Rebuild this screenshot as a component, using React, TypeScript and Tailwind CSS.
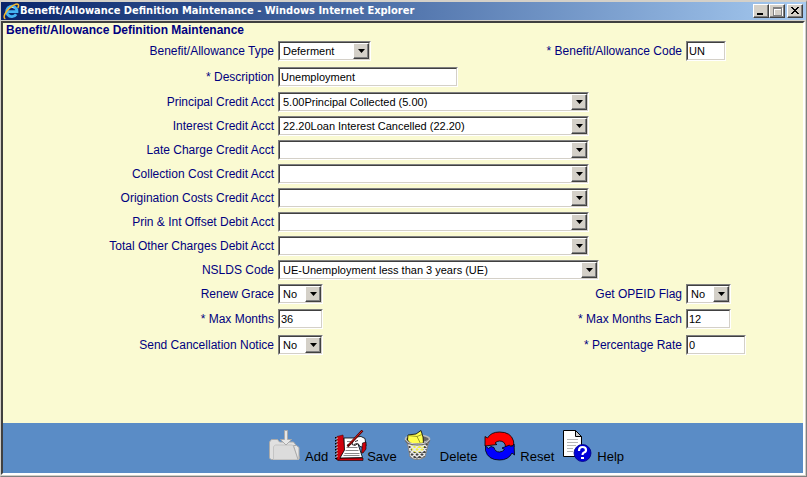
import type { ReactNode } from 'react';
import { clsx } from 'clsx';

const raised =
  'border border-t-white border-l-white border-r-[#404040] border-b-[#404040] bg-[#d4d0c8] shadow-[inset_-1px_-1px_0_#808080]';
const sunken =
  'border border-t-[#808080] border-l-[#808080] border-r-white border-b-white bg-white';
const sunkenInner =
  'border border-t-[#404040] border-l-[#404040] border-r-[#d4d0c8] border-b-[#d4d0c8]';
const controlFont =
  "font-['Liberation_Sans',Arial,sans-serif] text-[11px] leading-4 text-black";

type FieldProps = {
  id: string;
  label: string;
  width: string;
  value?: string;
};

function FieldLabel({ id, label }: { id: string; label: string }) {
  return (
    <label htmlFor={id} className="pr-1 text-right whitespace-nowrap">
      {label}
    </label>
  );
}

function SelectField({ id, label, width, value = '' }: FieldProps) {
  return (
    <>
      <FieldLabel id={id} label={label} />
      <div className={clsx('relative h-5', sunken, width)}>
        <select
          id={id}
          defaultValue={value}
          className={clsx(
            'block h-full w-full appearance-none pr-4 pl-[3px] outline-none',
            sunkenInner,
            controlFont
          )}
        >
          <option value={value}>{value}</option>
        </select>
        <span
          className={clsx(
            'pointer-events-none absolute top-px right-px bottom-px flex w-4 items-center justify-center',
            raised
          )}
        >
          <svg width="7" height="4" viewBox="0 0 7 4" aria-hidden="true">
            <path d="M0 0h7L3.5 4z" />
          </svg>
        </span>
      </div>
    </>
  );
}

function TextField({ id, label, width, value }: FieldProps) {
  return (
    <>
      <FieldLabel id={id} label={label} />
      <div className={clsx('h-5', sunken, width)}>
        <input
          id={id}
          type="text"
          defaultValue={value}
          className={clsx(
            'block h-full w-full px-px outline-none',
            sunkenInner,
            controlFont
          )}
        />
      </div>
    </>
  );
}

function Row({ tall, children }: { tall?: boolean; children: ReactNode }) {
  return (
    <div
      className={clsx(
        'grid grid-cols-[minmax(0,271fr)_minmax(0,262fr)_minmax(0,146fr)_minmax(0,117fr)] items-center',
        tall ? 'h-[26px]' : 'h-6'
      )}
    >
      {children}
    </div>
  );
}

const accounts = [
  { id: 'principal', label: 'Principal Credit Acct', value: '5.00Principal Collected (5.00)' },
  { id: 'interest', label: 'Interest Credit Acct', value: '22.20Loan Interest Cancelled (22.20)' },
  { id: 'late', label: 'Late Charge Credit Acct' },
  { id: 'collection', label: 'Collection Cost Credit Acct' },
  { id: 'origination', label: 'Origination Costs Credit Acct' },
  { id: 'offset', label: 'Prin & Int Offset Debit Acct' },
  { id: 'other', label: 'Total Other Charges Debit Acct' },
];

function ExplorerIcon() {
  return (
    <svg width="17" height="17" viewBox="0 0 17 17" fill="none" aria-hidden="true">
      <path
        d="M13.2 11.2A5.2 5.2 0 1 1 14 8.6H5"
        stroke="#45b5f2"
        strokeWidth="2.8"
      />
      <path d="M5.4 5.6a4.5 4.5 0 0 1 6-.4" stroke="#a5e2ff" />
      <path
        d="M2.4 15.7C-.8 15 2.3 8.5 7.4 4.4 11.2 1.2 15.2.1 15.6 2.2c.2 1-.4 2-.9 2.8"
        stroke="#f5b92c"
        strokeWidth="1.5"
      />
    </svg>
  );
}

function AddIcon() {
  return (
    <svg width="32" height="32" viewBox="0 0 32 32" strokeLinejoin="round" aria-hidden="true">
      <path d="M.5 28V12l2-2.500h6l2 2.500h14l2 2.500 4 13.500-1 1.500H2z" fill="#e0e0e0" stroke="#aaa" />
      <path d="M4.500 29.500V16.500l2-1.500h17l1 1.500 5 13z" fill="#dcdcdc" stroke="#c4c4c4" />
      <path d="M24.500 15.500h3l2.500 2v11l-1 1z" fill="#e4e4e4" stroke="#aaa" />
      <path d="M15.500.5h3v9h4l-5.500 5.500-5.500-5.500h4z" fill="#e6e6e6" stroke="#aaa" />
    </svg>
  );
}

function SaveIcon() {
  return (
    <svg width="32" height="32" viewBox="0 0 32 32" fill="none" aria-hidden="true">
      <path d="M2 28h26v2.500H3L1 29z" fill="#d0000c" stroke="#000" strokeWidth=".6" />
      <path d="M2 6.500L8 5l2 15-6 10-2-1z" fill="#d0000c" stroke="#500" strokeWidth=".6" />
      <path d="M9 8h12l6.500 19.500L5 28l4.500-8z" fill="#fff" stroke="#000" strokeWidth=".8" />
      <path d="M12 11.500h7M12 14.500h4M11.500 17.500h11M10.500 20.500h13M9.500 23.500h15M8.500 25.500h16" stroke="#888" />
      <path d="M1 7v22" stroke="#000" strokeWidth="2" strokeDasharray="1.5 1.5" />
      <path d="M2 7.500v21" stroke="#fff" strokeDasharray="1.5 1.5" />
      <path
        d="M18 11l3-4 5-.5 4 2 1 7-2 2-4-1-2-3-3 2-3-1z"
        fill="#fff"
        stroke="#000"
        strokeWidth=".8"
      />
      <path d="M27.500 13l3.500-1v7l-3 4h-1.500z" fill="#d0000c" stroke="#000" strokeWidth=".6" />
      <path d="M12.500 16.500L27.500.5" stroke="#500" strokeWidth="2.4" />
      <path d="M14 14.500L27 1" stroke="#d8201c" />
      <path d="M19 14.500l3-1M20 11.500l3-1" stroke="#000" strokeWidth=".8" />
    </svg>
  );
}

function DeleteIcon() {
  return (
    <svg width="32" height="32" viewBox="0 0 32 32" fill="none" aria-hidden="true">
      <clipPath id="basket">
        <path d="M3 11l3 16q7 5 15 0l4-16z" />
      </clipPath>
      <g clipPath="url(#basket)">
        <path d="M0 8h30v24H0z" fill="#444" />
        <path d="M6 13h15l-2 8-6 2-5-2z" fill="#f0f040" />
        <path
          d="M-14 10l22 22M-9 10l22 22M-4 10l22 22M1 10l22 22M6 10l22 22M11 10l22 22M16 10l22 22M21 10l22 22M10 10l-22 22M15 10l-22 22M20 10L-2 32M25 10L3 32M30 10L8 32M35 10L13 32M40 10L18 32"
          stroke="#e8e8e8"
          strokeWidth="1.4"
        />
      </g>
      <path d="M3 11l3 16q7 5 15 0l4-16" stroke="#888" />
      <ellipse cx="13.500" cy="9" rx="12" ry="4" fill="#666" stroke="#bbb" strokeWidth="1.6" />
      <path
        d="M4 5l8-1 5-3.500L19 7l.5 6-6 1-7-.5L3.500 10z"
        fill="#ffff50"
        stroke="#000"
        strokeWidth=".8"
      />
      <path d="M4 5.500l9 1 3.500 7M13 6.500l5-2" stroke="#86861c" strokeWidth=".8" />
      <path d="M1.500 10q2 4.500 12 4.500t12-4.500" stroke="#666" strokeWidth="2" />
      <path d="M1.500 9.500q2 4.500 12 4.500t12-4.500" stroke="#ddd" />
    </svg>
  );
}

function ResetIcon() {
  return (
    <svg width="32" height="32" viewBox="0 0 32 32" strokeWidth=".8" aria-hidden="true">
      <path
        d="M1 6.500l2.500 1.500Q7 2 15.500 2q11.500 0 14 9l.5 6-2.500-1.500-2 2-4-1q-.5-5.500-6-5.500-2.500 0-4.500 2l2 1.500L1 16z"
        fill="#f00"
        stroke="#000"
      />
      <path
        d="M30.500 25l-2.500-2q-3.500 7-12.500 7Q4 30 1.500 20.500V16l3 2.500 2.500-2 3 1q1 4.500 5.500 4.500 3 0 5-2.500l-2.500-1.500 7.500-3 2 2 2.500-3z"
        fill="#00f"
        stroke="#000"
      />
    </svg>
  );
}

function HelpIcon() {
  return (
    <svg width="32" height="32" viewBox="0 0 32 32" aria-hidden="true">
      <path d="M2.500.5h12l6 6v20h-18z" fill="#fff" stroke="#000" />
      <path d="M14.500.5v6h6z" fill="#ccc" stroke="#000" />
      <path d="M6 9.500h11M6 12.500h11M6 15.500h9M6 18.500h6M6 21.500h6" stroke="#b5b5b5" />
      <circle cx="21.500" cy="23" r="8.500" fill="#0000d8" stroke="#000080" strokeWidth=".8" />
      <path
        d="M18 21q0-4 3.500-4t3.500 3q0 2-2 2.500-1.500.5-1.500 2.500"
        fill="none"
        stroke="#fff"
        strokeWidth="2.2"
      />
      <path d="M20 27h3v2h-3z" fill="#fff" />
    </svg>
  );
}

const actions = [
  { label: 'Add', icon: <AddIcon />, gap: 'gap-1' },
  { label: 'Save', icon: <SaveIcon />, gap: 'gap-0' },
  { label: 'Delete', icon: <DeleteIcon />, gap: 'gap-1' },
  { label: 'Reset', icon: <ResetIcon />, gap: 'gap-1' },
  { label: 'Help', icon: <HelpIcon />, gap: 'gap-1' },
];

function WindowButton({ label, children }: { label: string; children: ReactNode }) {
  return (
    <button
      type="button"
      aria-label={label}
      className={clsx('flex h-[14px] w-4 items-center justify-center', raised)}
    >
      <svg width="12" height="10" viewBox="0 0 12 10" fill="none" shapeRendering="crispEdges">
        {children}
      </svg>
    </button>
  );
}

function TitleBar() {
  return (
    <header className="flex h-[18px] items-center bg-linear-to-r from-[#0a246a] to-[#a6caf0] pr-[3px] pl-[2px]">
      <ExplorerIcon />
      <h1 className="flex-1 truncate font-['DejaVu_Sans_Condensed','DejaVu_Sans',sans-serif] text-[11px] leading-4 font-bold text-white">
        Benefit/Allowance Definition Maintenance - Windows Internet Explorer
      </h1>
      <div className="flex">
        <WindowButton label="Minimize">
          <path d="M2 7h6v2H2z" fill="#000" />
        </WindowButton>
        <WindowButton label="Maximize">
          <path d="M2 1h8v8H2zM2 2h8" stroke="#fff" transform="translate(1 1)" />
          <path d="M2 1h8v8H2zM2 2h8" stroke="#808080" />
        </WindowButton>
      </div>
      <div className="ml-[2px] flex">
        <WindowButton label="Close">
          <path
            d="M2 1h2v1h1v1h2V2h1V1h2v1H9v1H8v1H7v1h1v1h1v1h1v1H8V7H7V6H5v1H4v1H2V7h1V6h1V5h1V4H4V3H3V2H2z"
            fill="#000"
          />
        </WindowButton>
      </div>
    </header>
  );
}

export default function App() {
  return (
    <div className="flex min-h-screen flex-col border border-t-2 border-t-[#d4d0c8] border-r-[#808080] border-b-[#808080] border-l-[#d4d0c8] bg-[#d4d0c8] pb-px font-['Liberation_Sans',Arial,sans-serif] text-[12px] leading-[15px] text-[#000080]">
      <TitleBar />
      <main className="mt-px mr-px flex flex-1 flex-col border-2 border-t-[#404040] border-r-white border-b-white border-l-[#404040] bg-[#fafad2]">
        <form className="flex flex-1 flex-col">
          <h2 className="pl-[3px] font-bold">
            Benefit/Allowance Definition Maintenance
          </h2>
          <div className="flex-1 pb-4 pl-1">
            <Row tall>
              <SelectField id="type" label="Benefit/Allowance Type" value="Deferment" width="w-[93px]" />
              <TextField id="code" label="* Benefit/Allowance Code" value="UN" width="w-10" />
            </Row>
            <Row tall>
              <TextField id="description" label="* Description" value="Unemployment" width="w-[180px]" />
            </Row>
            {accounts.map((account) => (
              <Row key={account.id}>
                <SelectField {...account} width="w-[311px]" />
              </Row>
            ))}
            <Row>
              <SelectField id="nslds" label="NSLDS Code" value="UE-Unemployment less than 3 years (UE)" width="w-[321px]" />
            </Row>
            <Row>
              <SelectField id="grace" label="Renew Grace" value="No" width="w-[45px]" />
              <SelectField id="opeid" label="Get OPEID Flag" value="No" width="w-[45px]" />
            </Row>
            <Row tall>
              <TextField id="months" label="* Max Months" value="36" width="w-[45px]" />
              <TextField id="monthsEach" label="* Max Months Each" value="12" width="w-[45px]" />
            </Row>
            <Row tall>
              <SelectField id="notice" label="Send Cancellation Notice" value="No" width="w-[45px]" />
              <TextField id="rate" label="* Percentage Rate" value="0" width="w-[60px]" />
            </Row>
          </div>
          <footer className="flex h-[50px] items-start gap-[7px] bg-[#5a8cc6] pt-[7px] pl-[33.25%] text-[13px] text-black">
            {actions.map(({ label, icon, gap }) => (
              <button key={label} type="button" className={clsx('flex items-end', gap)}>
                {icon}
                <span className="-mb-[2px]">{label}</span>
              </button>
            ))}
          </footer>
        </form>
      </main>
    </div>
  );
}
